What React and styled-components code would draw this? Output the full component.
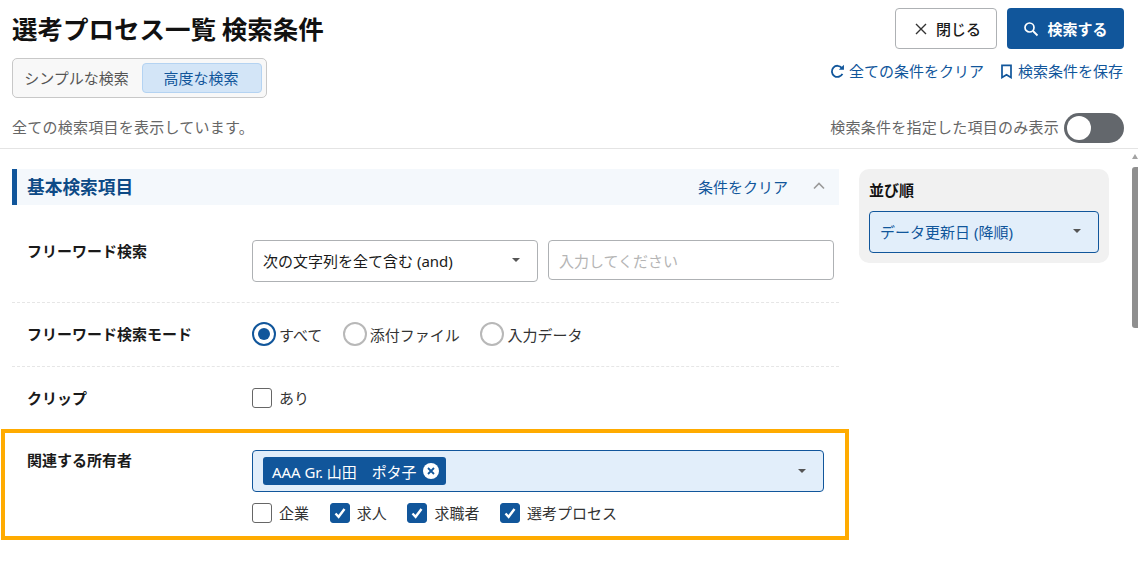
import React from "react";
import styled, { createGlobalStyle } from "styled-components";

const Global = createGlobalStyle`
  html, body { margin: 0; padding: 0; background: #fff; }
  body { font-family: "Noto Sans", "Noto Sans CJK JP", sans-serif; color: #1a1a1a; }
  * { box-sizing: border-box; }
`;
const Page = styled.div`width: 1138px; height: 565px; overflow: hidden; display: flex; flex-direction: column;`;
const Header = styled.header`height: 149px; border-bottom: 1px solid #e4e4e4; padding: 8px 14px 0 12px; display: flex; flex-direction: column;`;
const HeaderTop = styled.div`display: flex; justify-content: space-between; height: 97px;`;
const HeaderLeft = styled.div`display: flex; flex-direction: column;`;
const Title = styled.h1`margin: 0; font-size: 25.5px; line-height: 40px; font-weight: 700; color: #111; font-family: "Noto Sans CJK JP", sans-serif; height: 50px;`;
const Tabs = styled.div`width: 255px; height: 40px; border: 1px solid #c8c8c8; border-radius: 5px; background: #f8f8f8; padding: 4px; display: flex; align-items: stretch;`;
const Tab = styled.div`
  flex: ${p => (p.$active ? "0 0 120px" : "1")};
  display: flex; align-items: center; justify-content: center;
  font-size: 15px; border-radius: 4px; padding-bottom: 1px;
  padding-right: ${p => (p.$active ? "2px" : "6px")};
  color: ${p => (p.$active ? "#11569b" : "#555")};
  background: ${p => (p.$active ? "#d3e5f7" : "transparent")};
  border: ${p => (p.$active ? "1px solid #b4d3f2" : "none")};
`;
const HeaderRight = styled.div`display: flex; flex-direction: column; align-items: flex-end;`;
const Buttons = styled.div`display: flex; gap: 10px;`;
const Button = styled.div`
  height: 41px; border-radius: 4px; display: flex; align-items: center; justify-content: center; gap: 8px;
  font-size: 15px; font-weight: ${p => (p.$primary ? 700 : 500)};
  width: ${p => (p.$primary ? "117px" : "102px")};
  padding-left: ${p => (p.$primary ? "0" : "3px")};
  background: ${p => (p.$primary ? "#11569b" : "#fff")};
  color: ${p => (p.$primary ? "#fff" : "#1a1a1a")};
  border: ${p => (p.$primary ? "none" : "1px solid #aeb1b4")};
`;
const Links = styled.div`display: flex; gap: 15px; margin: 12px 1px 0 0;`;
const LinkItem = styled.div`display: flex; align-items: center; gap: 4px; color: #11569b; font-size: 15px; line-height: 20px;`;
const HeaderBottom = styled.div`display: flex; justify-content: space-between; align-items: center; height: 38px; margin-top: 4px; color: #666; font-size: 15px; letter-spacing: 0.25px;`;
const Hint = styled.span`padding-bottom: 4px;`;
const ToggleWrap = styled.div`display: flex; align-items: center; gap: 5px;`;
const Toggle = styled.div`width: 60px; height: 30px; border-radius: 15px; background: #63676c; padding: 3px; display: flex;`;
const Knob = styled.div`width: 24px; height: 24px; border-radius: 50%; background: #fff;`;

const Body = styled.div`flex: 1; display: flex; position: relative; padding: 20px 0 0 12px; gap: 20px;`;
const Main = styled.main`width: 827px; display: flex; flex-direction: column;`;
const SectionHead = styled.div`height: 36px; background: #f4f8fc; border-left: 5px solid #11569b; display: flex; align-items: center; padding: 0 14px 2px 10px;`;
const SectionTitle = styled.h2`margin: 0; font-size: 17.7px; font-weight: 700; color: #0d4a86; flex: 1; font-family: "Noto Sans CJK JP", sans-serif;`;
const SectionClear = styled.span`font-size: 15px; color: #11569b; margin-right: 25px;`;
const Row = styled.div`
  display: flex; padding: ${p => p.$pad || "0"}; height: ${p => p.$h}px;
  border-bottom: ${p => (p.$last ? "none" : "1px dashed #e6e6e6")};
`;
const Label = styled.div`width: 240px; padding-left: 15px; font-size: 15px; font-weight: 700; color: #1a1a1a; line-height: 20px; flex: none;`;
const Field = styled.div`flex: 1; display: flex; gap: 10px; align-items: flex-start; min-width: 0; margin-top: ${p => p.$mt || 0}px;`;
const Select = styled.div`
  width: ${p => p.$w || "286px"}; height: 42px; border: 1px solid #aeb1b4; border-radius: 4px; display: flex; align-items: center;
  justify-content: space-between; padding: 0 17px 2px 10px; font-size: 15px; color: #1a1a1a; background: #fff;
`;
const Caret = styled.span`width: 0; height: 0; border-left: 4.5px solid transparent; border-right: 4.5px solid transparent; border-top: 4.5px solid #555; flex: none;`;
const Input = styled.div`flex: 1; height: 40px; border: 1px solid #aeb1b4; border-radius: 4px; padding: 0 10px; display: flex; align-items: center; font-size: 15px; color: #b5b5b5;`;
const RadioGroup = styled.div`display: flex; gap: 20.5px;`;
const RadioItem = styled.label`display: flex; align-items: center; gap: 3px; font-size: 15px; color: #333;`;
const RadioCircle = styled.span`
  width: 24px; height: 24px; border-radius: 50%; flex: none; display: flex; align-items: center; justify-content: center;
  border: 2.5px solid ${p => (p.$on ? "#11569b" : "#b8b8b8")};
  &::after { content: ""; width: 12px; height: 12px; border-radius: 50%; background: ${p => (p.$on ? "#11569b" : "transparent")}; }
`;
const CheckItem = styled.label`display: flex; align-items: center; gap: 7px; font-size: 15px; color: #333;`;
const CheckBox = styled.span`
  width: 20px; height: 20px; border-radius: 3px; flex: none; display: flex; align-items: center; justify-content: center;
  background: ${p => (p.$on ? "#11569b" : "#fff")}; border: 1px solid ${p => (p.$on ? "#11569b" : "#666")};
`;
const Highlight = styled.div`
  margin: 2px -10px 0 -11px; height: 111px; border: 4px solid #ffab00; display: flex; padding: 17px 21px 0 11px;
`;
const HighLabel = styled(Label)`width: 236px; padding-left: 11px;`;
const OwnerCol = styled.div`flex: 1; display: flex; flex-direction: column;`;
const OwnerSelect = styled.div`
  height: 42px; border: 1px solid #11569b; border-radius: 4px; background: #e2eefa; display: flex; align-items: center;
  justify-content: space-between; padding: 0 17px 0 10px;
`;
const Chip = styled.div`height: 28px; background: #11569b; color: #fff; border-radius: 3px; display: flex; align-items: center; gap: 7px; padding: 0 7px 0 9px; font-size: 15px; white-space: pre; letter-spacing: -0.06px;`;
const CheckRow = styled.div`display: flex; gap: 20.7px; margin-top: 10px;`;
const SidePanel = styled.aside`width: 250px; height: 94px; background: #f1f1f1; border-radius: 10px; padding: 10px; align-self: flex-start;`;
const SideTitle = styled.div`font-size: 15px; font-weight: 700; line-height: 22px; color: #111; margin-bottom: 10px;`;
const SideSelect = styled(Select)`background: #e2eefa; border-color: #11569b; color: #11569b; width: 230px;`;
const Scrollbar = styled.div`position: absolute; right: 0; top: 0; bottom: 0; width: 6px;`;
const ScrollArrow = styled.div`position: absolute; top: 5px; left: 0; width: 0; height: 0; border-left: 3px solid transparent; border-right: 3px solid transparent; border-bottom: 5px solid #a3a3a3;`;
const ScrollThumb = styled.div`position: absolute; top: 18px; left: 0; width: 6px; height: 161px; background: #8f8f8f; border-radius: 3px 0 0 3px;`;

const Check = () => (
  <svg width="14" height="14" viewBox="0 0 14 14" fill="none"><path d="M2.5 7.5 L5.6 10.8 L11.5 3" stroke="#fff" strokeWidth="2.4" /></svg>
);
const CloseIcon = () => (
  <svg width="14" height="14" viewBox="0 0 14 14" fill="none"><path d="M2 2 L12 12 M12 2 L2 12" stroke="#333" strokeWidth="1.4" /></svg>
);
const SearchIcon = () => (
  <svg width="16" height="16" viewBox="0 0 16 16" fill="none"><circle cx="6.5" cy="6.5" r="4.5" stroke="#fff" strokeWidth="1.7" /><path d="M10 10 L14.5 14.5" stroke="#fff" strokeWidth="1.8" /></svg>
);
const RefreshIcon = () => (
  <svg width="15" height="15" viewBox="0 0 14 14" fill="none"><path d="M11.6 9.2 A5.2 5.2 0 1 1 11 3.6" stroke="#11569b" strokeWidth="1.7" /><path d="M8.2 5.4 H13 V0.8 Z" fill="#11569b" /></svg>
);
const BookmarkIcon = () => (
  <svg width="15" height="15" viewBox="0 0 14 14" fill="none"><path d="M2.8 1.2 H11.2 V12.6 L7 10 L2.8 12.6 Z" stroke="#11569b" strokeWidth="1.6" /></svg>
);
const Chevron = () => (
  <svg width="12" height="8" viewBox="0 0 12 8" fill="none"><path d="M1 6.5 L6 1.5 L11 6.5" stroke="#9a9a9a" strokeWidth="1.6" /></svg>
);
const ChipClose = () => (
  <svg width="16" height="16" viewBox="0 0 16 16"><circle cx="8" cy="8" r="8" fill="#fff" /><path d="M5 5 L11 11 M11 5 L5 11" stroke="#11569b" strokeWidth="1.8" /></svg>
);

const Cb = ({ on, children }) => (
  <CheckItem><CheckBox $on={on}>{on && <Check />}</CheckBox>{children}</CheckItem>
);
const Radio = ({ on, children }) => (
  <RadioItem><RadioCircle $on={on} />{children}</RadioItem>
);

export default function App() {
  return (
    <Page>
      <Global />
      <Header>
        <HeaderTop>
          <HeaderLeft>
            <Title>選考プロセス一覧 検索条件</Title>
            <Tabs>
              <Tab>シンプルな検索</Tab>
              <Tab $active>高度な検索</Tab>
            </Tabs>
          </HeaderLeft>
          <HeaderRight>
            <Buttons>
              <Button><CloseIcon />閉じる</Button>
              <Button $primary><SearchIcon />検索する</Button>
            </Buttons>
            <Links>
              <LinkItem><RefreshIcon />全ての条件をクリア</LinkItem>
              <LinkItem><BookmarkIcon />検索条件を保存</LinkItem>
            </Links>
          </HeaderRight>
        </HeaderTop>
        <HeaderBottom>
          <Hint>全ての検索項目を表示しています。</Hint>
          <ToggleWrap><Hint>検索条件を指定した項目のみ表示</Hint><Toggle><Knob /></Toggle></ToggleWrap>
        </HeaderBottom>
      </Header>
      <Body>
        <Main>
          <SectionHead>
            <SectionTitle>基本検索項目</SectionTitle>
            <SectionClear>条件をクリア</SectionClear>
            <Chevron />
          </SectionHead>
          <Row $h={98} $pad="36px 5px 0 0">
            <Label>フリーワード検索</Label>
            <Field $mt={-1}>
              <Select>次の文字列を全て含む (and)<Caret /></Select>
              <Input>入力してください</Input>
            </Field>
          </Row>
          <Row $h={64} $pad="21px 0 0 0">
            <Label>フリーワード検索モード</Label>
            <Field $mt={-2}><RadioGroup>
              <Radio on>すべて</Radio>
              <Radio>添付ファイル</Radio>
              <Radio>入力データ</Radio>
            </RadioGroup></Field>
          </Row>
          <Row $h={60} $pad="21px 0 0 0" $last>
            <Label>クリップ</Label>
            <Field $mt={-1}><Cb>あり</Cb></Field>
          </Row>
          <Highlight>
            <HighLabel>関連する所有者</HighLabel>
            <OwnerCol>
              <OwnerSelect>
                <Chip>AAA Gr. 山田　ポタ子<ChipClose /></Chip>
                <Caret />
              </OwnerSelect>
              <CheckRow>
                <Cb>企業</Cb>
                <Cb on>求人</Cb>
                <Cb on>求職者</Cb>
                <Cb on>選考プロセス</Cb>
              </CheckRow>
            </OwnerCol>
          </Highlight>
        </Main>
        <SidePanel>
          <SideTitle>並び順</SideTitle>
          <SideSelect>データ更新日 (降順)<Caret /></SideSelect>
        </SidePanel>
        <Scrollbar><ScrollArrow /><ScrollThumb /></Scrollbar>
      </Body>
    </Page>
  );
}
